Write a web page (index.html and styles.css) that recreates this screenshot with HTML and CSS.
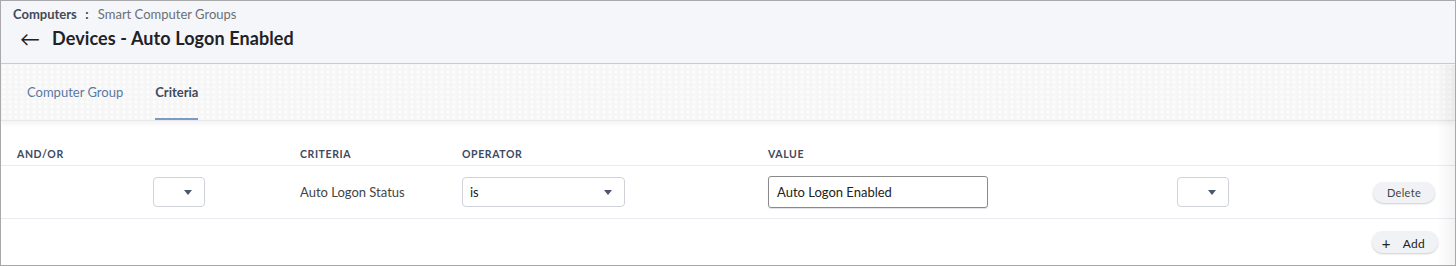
FILE: index.html
```html
<!DOCTYPE html>
<html lang="en">
<head>
    <meta charset="UTF-8">
    <meta name="viewport" content="width=device-width, initial-scale=1.0">
    <title>Devices - Auto Logon Enabled</title>
    <link rel="stylesheet" href="styles.css">
</head>
<body>
    <div class="page">
        <div class="header">
            <div class="crumbs">
                <span class="crumb-root">Computers</span>
                <span class="crumb-sep">:</span>
                <span class="crumb-leaf">Smart Computer Groups</span>
            </div>
            <div class="title-row">
                <span class="back">&#8592;</span>
                <h1>Devices - Auto Logon Enabled</h1>
            </div>
        </div>

        <div class="tabs">
            <a class="tab">Computer Group</a>
            <a class="tab active">Criteria</a>
        </div>

        <div class="criteria">
            <div class="row head">
                <div class="c-andor">AND/OR</div>
                <div class="c-paren"></div>
                <div class="c-crit">CRITERIA</div>
                <div class="c-op">OPERATOR</div>
                <div class="c-val">VALUE</div>
                <div class="c-paren2"></div>
                <div class="c-act"></div>
            </div>
            <div class="row body">
                <div class="c-andor"></div>
                <div class="c-paren"><div class="select small"><span class="caret"></span></div></div>
                <div class="c-crit">Auto Logon Status</div>
                <div class="c-op"><div class="select wide"><span>is</span><span class="caret"></span></div></div>
                <div class="c-val"><div class="input">Auto Logon Enabled</div></div>
                <div class="c-paren2"><div class="select small"><span class="caret"></span></div></div>
                <div class="c-act"><button class="pill">Delete</button></div>
            </div>
            <div class="row foot">
                <button class="pill add"><span class="plus">+</span>Add</button>
            </div>
        </div>
        <div class="edge"></div>
    </div>
</body>
</html>
```

FILE: styles.css
```css
html, body {
    margin: 0;
    padding: 0;
}
body {
    font-family: Lato, "Open Sans", Arial, sans-serif;
    background: #ffffff;
    color: #333;
}
.page {
    position: relative;
    width: 1456px;
    height: 266px;
    box-sizing: border-box;
    border: 1px solid #a9a9a9;
    overflow: hidden;
}
.header {
    background: #f5f6fa;
    height: 62px;
    border-bottom: 1px solid #c6cad2;
    padding-left: 12px;
}
.crumbs {
    padding-top: 4px;
    font-size: 13px;
    height: 18px;
    line-height: 18px;
}
.crumb-root {
    font-weight: bold;
    color: #424a57;
}
.crumb-sep {
    color: #444;
    margin: 0 6px 0 5px;
    font-weight: bold;
}
.crumb-leaf {
    color: #6b6f76;
}
.title-row {
    display: flex;
    align-items: center;
    height: 30px;
    padding-left: 7px;
}
.back {
    font-size: 20px;
    color: #222;
    width: 32px;
    line-height: 20px;
}
h1 {
    margin: 0;
    font-size: 18px;
    font-weight: bold;
    color: #1f2227;
    letter-spacing: 0.1px;
}
.tabs {
    height: 56px;
    display: flex;
    padding-left: 26px;
    background-color: #f6f6f6;
    background-image: radial-gradient(circle at 3px 3px, #fdfdfd 1.3px, transparent 1.8px);
    background-size: 6px 5px;
    border-bottom: 1px solid #e6e8ec;
    box-shadow: 0 3px 4px rgba(0, 0, 0, 0.05);
}
.tab {
    font-size: 13px;
    color: #5a78a3;
    line-height: 56px;
    margin-right: 32px;
    box-sizing: border-box;
    height: 56px;
}
.tab.active {
    color: #3f4a5d;
    font-weight: bold;
    border-bottom: 2px solid #7b9ac4;
}
.criteria {
    font-size: 13px;
}
.row {
    display: flex;
    align-items: center;
    padding-left: 16px;
    border-bottom: 1px solid #e8ebf0;
}
.row.head {
    height: 44px;
    align-items: flex-end;
    font-size: 10.5px;
    font-weight: bold;
    letter-spacing: 0.6px;
    color: #3d4a60;
}
.row.head > div {
    padding-bottom: 5px;
}
.row.body {
    height: 52px;
    color: #444;
}
.row.foot {
    height: 45px;
    border-bottom: none;
    justify-content: flex-end;
    padding-right: 17px;
}
.c-andor { width: 136px; }
.c-paren { width: 147px; }
.c-crit { width: 162px; }
.c-op { width: 306px; }
.c-val { width: 409px; }
.c-paren2 { width: 196px; }
.c-act { flex: 1; }
.select {
    position: relative;
    height: 30px;
    box-sizing: border-box;
    border: 1px solid #cfd2d8;
    border-radius: 4px;
    background: #fff;
    display: flex;
    align-items: center;
    padding-left: 7px;
    color: #222;
}
.select.small { width: 52px; }
.select.wide { width: 163px; }
.caret {
    position: absolute;
    right: 12px;
    top: 12px;
    width: 0;
    height: 0;
    border-left: 4px solid transparent;
    border-right: 4px solid transparent;
    border-top: 5px solid #4b5670;
}
.input {
    width: 220px;
    height: 32px;
    box-sizing: border-box;
    border: 1px solid #8a8a8a;
    border-radius: 3px;
    padding-left: 8px;
    line-height: 30px;
    color: #222;
    box-shadow: 0 1px 1px rgba(0, 0, 0, 0.12);
}
.pill {
    font-family: Lato, "Open Sans", Arial, sans-serif;
    font-size: 11px;
    color: #444;
    background: #f1f2f5;
    border: none;
    border-radius: 11px;
    height: 21px;
    padding: 0 14px;
    box-shadow: 0 1px 2px rgba(0, 0, 0, 0.2);
    letter-spacing: 0.3px;
}
.c-act .pill {
    margin-top: 1px;
}
.pill.add {
    font-size: 12px;
    height: 22px;
    padding: 0 13px 0 10px;
    color: #222;
}
.plus {
    font-size: 15px;
    margin-right: 12px;
    position: relative;
    top: 1px;
}
.edge {
    position: absolute;
    top: 64px;
    right: 0;
    width: 18px;
    bottom: 0;
    background: linear-gradient(to right, rgba(0, 0, 0, 0), rgba(0, 0, 0, 0.05));
}
```
